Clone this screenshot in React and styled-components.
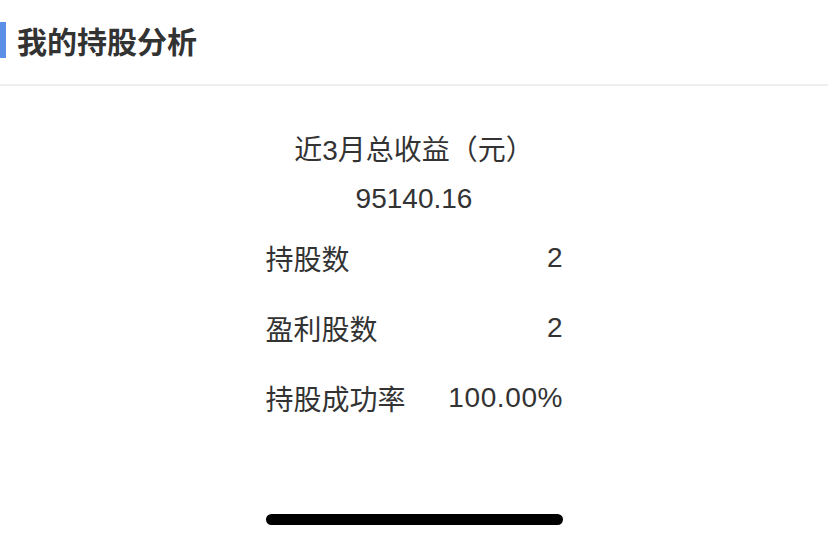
import React from "react";
import styled, { createGlobalStyle } from "styled-components";

const Global = createGlobalStyle`
  html, body { margin: 0; padding: 0; background: #ffffff; }
  body {
    font-family: "Liberation Sans", "Noto Sans CJK SC", sans-serif;
    color: #333333;
  }
`;

const Page = styled.div`
  width: 828px;
  height: 541px;
  display: flex;
  flex-direction: column;
  background: #ffffff;
  overflow: hidden;
`;

const Header = styled.header`
  height: 86px;
  box-sizing: border-box;
  padding-bottom: 4px;
  display: flex;
  align-items: center;
  border-bottom: 2px solid #eeeeee;
`;

const Accent = styled.span`
  width: 6px;
  height: 36px;
  background: #5b8ee6;
`;

const Title = styled.h1`
  margin: 0 0 0 11px;
  font-family: "Noto Sans CJK SC", sans-serif;
  font-size: 30px;
  line-height: 40px;
  font-weight: 600;
  color: #333333;
`;

const Content = styled.main`
  flex: 1;
  display: flex;
  flex-direction: column;
  align-items: center;
  padding-top: 45px;
`;

const SummaryLabel = styled.div`
  font-size: 28px;
  line-height: 40px;
  color: #333333;
`;

const SummaryValue = styled.div`
  margin-top: 8px;
  font-size: 28px;
  line-height: 40px;
  color: #333333;
`;

const Stats = styled.div`
  width: 297px;
  margin-top: 4px;
  display: flex;
  flex-direction: column;
`;

const Row = styled.div`
  height: 70px;
  display: flex;
  align-items: center;
  justify-content: space-between;
  font-size: 28px;
  color: #333333;
`;

const Value = styled.span`
  letter-spacing: 0.6px;
  margin-right: -0.6px;
`;

const HomeIndicator = styled.div`
  width: 297px;
  height: 11px;
  border-radius: 6px;
  background: #000000;
  margin-top: auto;
  margin-bottom: 16px;
`;

const stats = [
  { label: "持股数", value: "2" },
  { label: "盈利股数", value: "2" },
  { label: "持股成功率", value: "100.00%" },
];

export default function App() {
  return (
    <Page>
      <Global />
      <Header>
        <Accent />
        <Title>我的持股分析</Title>
      </Header>
      <Content>
        <SummaryLabel>近3月总收益（元）</SummaryLabel>
        <SummaryValue>95140.16</SummaryValue>
        <Stats>
          {stats.map((s) => (
            <Row key={s.label}>
              <span>{s.label}</span>
              <Value>{s.value}</Value>
            </Row>
          ))}
        </Stats>
        <HomeIndicator />
      </Content>
    </Page>
  );
}
